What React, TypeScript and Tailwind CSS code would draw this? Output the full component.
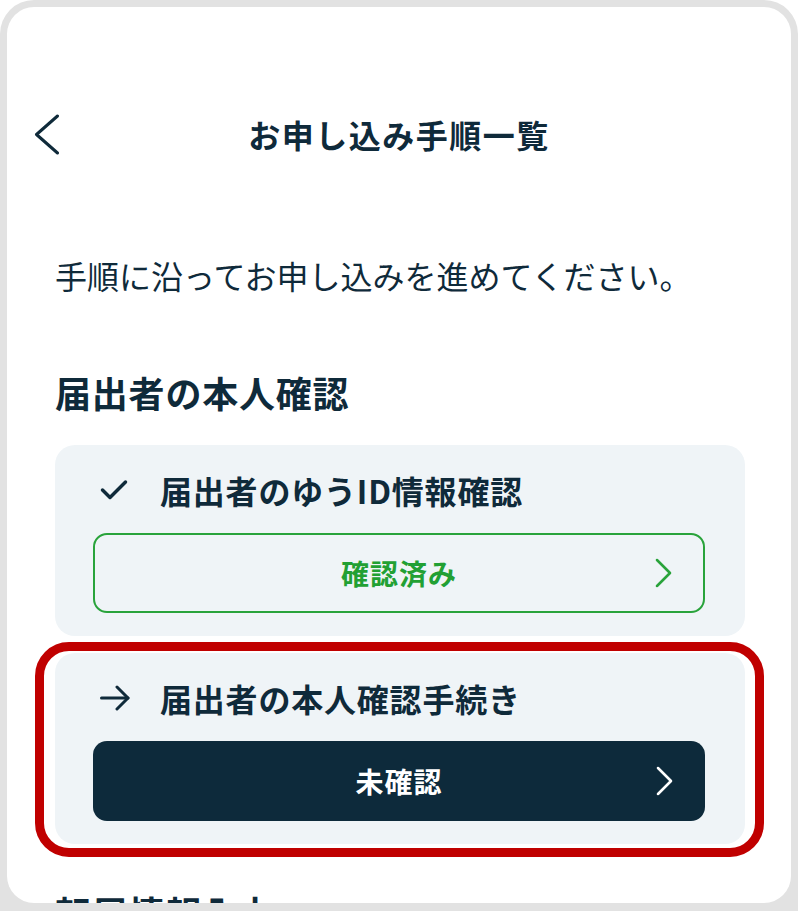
import React from "react";

function BackIcon() {
  return (
    <svg width="26" height="41" viewBox="0 0 26 41" fill="none" stroke="#0f2a3a" strokeWidth="3" strokeLinecap="round" strokeLinejoin="round">
      <path d="M23.5 2 L2.5 20.5 L23.5 39" />
    </svg>
  );
}

function CheckIcon() {
  return (
    <svg width="28" height="22" viewBox="0 0 28 22" fill="none" stroke="#0f2a3a" strokeWidth="3.5" strokeLinecap="round" strokeLinejoin="round">
      <path d="M2.5 11 L10 18.5 L25.5 3" />
    </svg>
  );
}

function ArrowIcon() {
  return (
    <svg width="30" height="26" viewBox="0 0 30 26" fill="none" stroke="#0f2a3a" strokeWidth="3" strokeLinecap="round" strokeLinejoin="round">
      <path d="M1.5 13 H28" />
      <path d="M17 2 L28 13 L17 24" />
    </svg>
  );
}

function ChevronRight({ color }: { color: string }) {
  return (
    <svg width="17" height="29" viewBox="0 0 17 29" fill="none" stroke={color} strokeWidth="2.6" strokeLinecap="round" strokeLinejoin="round">
      <path d="M2 1.5 L15 14.5 L2 27.5" />
    </svg>
  );
}

type Step = {
  title: string;
  done: boolean;
  status: string;
  highlight?: boolean;
};

const steps: Step[] = [
  { title: "届出者のゆうID情報確認", done: true, status: "確認済み" },
  { title: "届出者の本人確認手続き", done: false, status: "未確認", highlight: true },
];

function StepCard({ step }: { step: Step }) {
  return (
    <div className="relative">
      {step.highlight && (
        <div className="pointer-events-none absolute -left-[20px] -right-[19px] -top-[11px] -bottom-[13px] rounded-[34px] border-[9px] border-[#c00000]" />
      )}
      <div className="rounded-[20px] bg-[#eff4f7] pt-[27px] pb-[23px]">
        <div className="flex h-[36px] items-center pl-[45px]">
          <div className="flex w-[60px] items-center">
            {step.done ? <CheckIcon /> : <ArrowIcon />}
          </div>
          <span className="text-[32px] font-bold tracking-[0.8px] text-[#0f2a3a]">{step.title}</span>
        </div>
        <div className="mt-[25px] ml-[38px] mr-[40px]">
          {step.done ? (
            <div className="relative flex h-[80px] items-center justify-center rounded-[14px] border-2 border-[#29a33b]">
              <span className="text-[28px] font-bold tracking-[1px] text-[#22a033]">{step.status}</span>
              <div className="absolute right-[31px] top-1/2 -translate-y-1/2">
                <ChevronRight color="#29a33b" />
              </div>
            </div>
          ) : (
            <div className="relative flex h-[80px] items-center justify-center rounded-[14px] bg-[#0d2a3b]">
              <span className="text-[28px] font-bold tracking-[1px] text-white">{step.status}</span>
              <div className="absolute right-[32px] top-1/2 -translate-y-1/2">
                <ChevronRight color="#ffffff" />
              </div>
            </div>
          )}
        </div>
      </div>
    </div>
  );
}

export default function App() {
  return (
    <div className="h-[911px] w-[798px] overflow-hidden bg-white font-['Noto_Sans_CJK_JP',sans-serif] text-[#0f2a3a]">
      {/* device frame */}
      <div className="h-full rounded-t-[34px] bg-[#e2e2e2] px-[7px] pt-[7px] pb-[8px]">
        <div className="h-full overflow-hidden rounded-[27px] bg-white">
          <div className="pt-[99px]">
            {/* Header */}
            <div className="grid h-[56px] grid-cols-[40px_1fr_40px] items-center px-[27px]">
              <BackIcon />
              <h1 className="text-center text-[32px] font-bold tracking-[1.5px]">お申し込み手順一覧</h1>
              <div />
            </div>

            <div className="pl-[48px] pr-[46px]">
              <p className="mt-[89px] text-[32px] leading-[48px]">手順に沿ってお申し込みを進めてください。</p>

              <h2 className="mt-[67px] text-[36px] font-bold leading-[52px] tracking-[0.8px]">届出者の本人確認</h2>

              <div className="mt-[27px] flex flex-col gap-[17px]">
                {steps.map((step) => (
                  <StepCard key={step.title} step={step} />
                ))}
              </div>

              <h2 className="mt-[42px] text-[36px] font-bold leading-[52px] tracking-[0.8px]">転居情報入力</h2>
            </div>
          </div>
        </div>
      </div>
    </div>
  );
}
